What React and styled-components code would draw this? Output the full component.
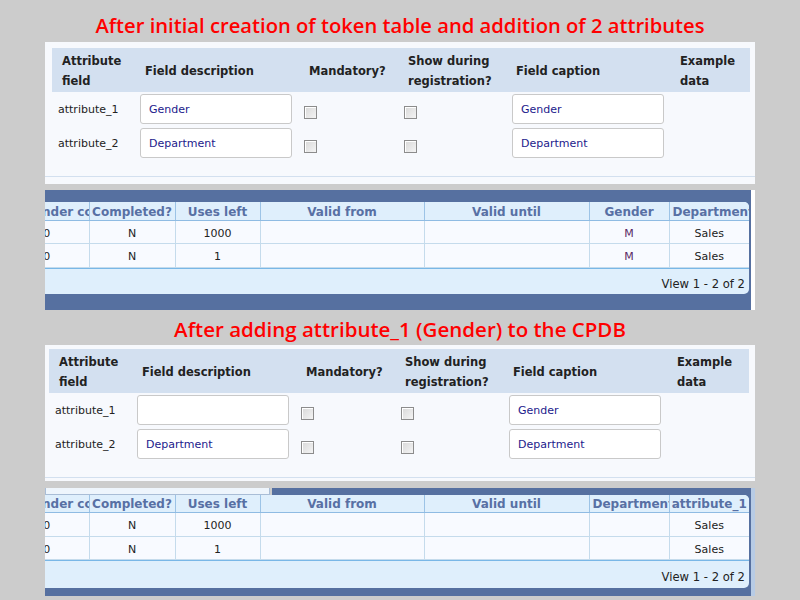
import React from 'react';
import styled, { createGlobalStyle } from 'styled-components';

const DARK = '#5670a0';

const Global = createGlobalStyle`
  html, body { margin: 0; padding: 0; background: #cccccc; }
  body { font-family: "DejaVu Sans", Verdana, sans-serif; }
  #root { width: 800px; height: 600px; }
`;

const Page = styled.div`
  width: 800px;
  height: 600px;
  overflow: hidden;
  background: #cccccc;
  display: flex;
  flex-direction: column;
`;

const Title = styled.h1`
  margin: 0;
  padding: ${p => p.$top}px 0 ${p => p.$bottom}px;
  line-height: 28px;
  text-align: center;
  color: #ff0000;
  font-family: "Open Sans", "Liberation Sans", sans-serif;
  font-weight: 600;
  font-size: ${p => p.$size}px;
  white-space: nowrap;
`;

const Panel = styled.section`
  margin-left: 45px;
  width: 710px;
  background: #f7f9fd;
  padding-bottom: ${p => p.$tail}px;
`;

const PanelBody = styled.div`
  padding: ${p => p.$top}px ${p => p.$right}px 16px ${p => p.$left}px;
  border-bottom: 1px solid #d3e0ef;
`;

const AttrGrid = styled.div`
  display: grid;
  grid-template-columns: 84px 164px 100px 108px 164px 1fr;
  grid-auto-rows: auto;
`;

const HeadCell = styled.div`
  box-sizing: border-box;
  background: #d3e0f0;
  height: 44px;
  display: flex;
  align-items: center;
  padding: 2px 0 0 ${p => p.$pad}px;
  font-family: "DejaVu Sans", Verdana, sans-serif;
  font-weight: bold;
  font-size: 11.5px;
  line-height: 20px;
  color: #222;
`;

const BodyCell = styled.div`
  height: 34px;
  display: flex;
  align-items: center;
  padding-left: ${p => p.$pad ?? 4}px;
  font-size: 11px;
  color: #222;
`;

const Field = styled.input`
  box-sizing: border-box;
  width: 152px;
  height: 30px;
  margin: 0;
  border: 1px solid #c9c9c9;
  border-radius: 3px;
  background: #ffffff;
  padding: 0 8px;
  font-family: "DejaVu Sans", Verdana, sans-serif;
  font-size: 11px;
  color: #1c1a8c;
  outline: none;
`;

const Check = styled.input`
  appearance: none;
  box-sizing: border-box;
  width: 13px;
  height: 13px;
  margin: 7px 0 0 0;
  border: 1px solid #8c8c8c;
  background: linear-gradient(135deg, #d8d8d8 0%, #f4f4f4 100%);
  box-shadow: inset 1px 1px 0 #ffffff;
`;

const GridWrap = styled.div`
  margin: ${p => p.$mt}px 0 0 45px;
  width: 710px;
  display: flex;
`;

const GridFrame = styled.div`
  width: 706px;
  display: flex;
  flex-direction: column;
`;

const TopBar = styled.div`
  height: ${p => p.$h}px;
  background: ${p => (p.$split ? '#cccccc' : DARK)};
  display: flex;
`;

const Stub = styled.div`
  box-sizing: border-box;
  width: 225px;
  background: #eef5fc;
  border: 1px solid #a9bdd6;
  border-top: none;
`;

const DarkFill = styled.div`
  flex: 1;
  margin-left: 2px;
  background: ${DARK};
`;

const GridBody = styled.div`
  background: ${DARK};
  padding-right: 2px;
`;

const Viewport = styled.div`
  overflow: hidden;
  border-radius: 0 5px 5px 0;
  background: #dfeffc;
`;

const Table = styled.table`
  border-collapse: collapse;
  table-layout: fixed;
  width: 744px;
  margin-left: -40px;
`;

const Th = styled.th`
  height: ${p => p.$h}px;
  padding: 1px ${p => (p.$clip ? 3 : 2)}px 0;
  background: #dfeffc;
  color: #5870a4;
  font-family: "DejaVu Sans", Verdana, sans-serif;
  font-weight: bold;
  font-size: 12px;
  text-align: ${p => (p.$clip ? 'left' : 'center')};
  white-space: nowrap;
  overflow: hidden;
  border-right: 1px solid #9cc3e6;
  border-bottom: 1px solid #8fbbe3;
  &:last-child { border-right: none; }
`;

const Td = styled.td`
  height: ${p => p.$h}px;
  padding: 2px 2px 0;
  background: #f8faff;
  color: ${p => p.$color || '#222'};
  font-family: "DejaVu Sans", Verdana, sans-serif;
  font-size: 11px;
  text-align: center;
  white-space: nowrap;
  overflow: hidden;
  border-right: 1px solid #c5dbec;
  border-bottom: 1px solid #c5dbec;
  &:last-child { border-right: none; }
`;

const Pager = styled.div`
  box-sizing: border-box;
  height: ${p => p.$h}px;
  border-top: 1px solid #79b7e7;
  display: flex;
  align-items: center;
  justify-content: flex-end;
  padding: 5px 4px 0 0;
  font-size: 11.6px;
  color: #222;
`;

const BottomBar = styled.div`
  height: ${p => p.$h}px;
  background: ${DARK};
`;

const Strip = styled.div`
  width: 4px;
  background: ${p => p.$bg};
`;

const COLS = [84, 86, 85, 164, 165, 80, 80];

function AttributePanel({ first, top, left, right, tail }) {
  const heads = [
    ['Attribute', 'field'],
    ['Field description'],
    ['Mandatory?'],
    ['Show during', 'registration?'],
    ['Field caption'],
    ['Example', 'data'],
  ];
  const pads = [10, 9, 9, 8, 8, 8];
  const rows = [
    { name: 'attribute_1', desc: first, cap: 'Gender' },
    { name: 'attribute_2', desc: 'Department', cap: 'Department' },
  ];
  return (
    <Panel $tail={tail}>
      <PanelBody $top={top} $left={left} $right={right}>
        <AttrGrid>
          {heads.map((h, i) => (
            <HeadCell key={i} $pad={pads[i]}>
              <span>
                {h.map((l, j) => (
                  <React.Fragment key={j}>
                    {j > 0 && <br />}
                    {l}
                  </React.Fragment>
                ))}
              </span>
            </HeadCell>
          ))}
          {rows.map(r => (
            <React.Fragment key={r.name}>
              <BodyCell $pad={6}>{r.name}</BodyCell>
              <BodyCell><Field readOnly value={r.desc} /></BodyCell>
              <BodyCell><Check type="checkbox" readOnly /></BodyCell>
              <BodyCell><Check type="checkbox" readOnly /></BodyCell>
              <BodyCell><Field readOnly value={r.cap} /></BodyCell>
              <BodyCell />
            </React.Fragment>
          ))}
        </AttrGrid>
      </PanelBody>
    </Panel>
  );
}

function TokenGrid({ mt, heads, rows, split, topH, headH, rowH, footH, bottomH, strip }) {
  return (
    <GridWrap $mt={mt}>
      <GridFrame>
        <TopBar $h={topH} $split={split}>
          {split && (
            <>
              <Stub />
              <DarkFill />
            </>
          )}
        </TopBar>
        <GridBody>
          <Viewport>
            <Table>
              <colgroup>
                {COLS.map((w, i) => <col key={i} style={{ width: w }} />)}
              </colgroup>
              <thead>
                <tr>
                  {heads.map((h, i) => (
                    <Th key={i} $h={headH} $clip={i === 0 || h === 'Department'}>{h}</Th>
                  ))}
                </tr>
              </thead>
              <tbody>
                {rows.map((r, ri) => (
                  <tr key={ri}>
                    {r.map((c, ci) => (
                      <Td key={ci} $h={rowH[ri]} $color={c === 'M' ? '#5b2a66' : undefined}>{c}</Td>
                    ))}
                  </tr>
                ))}
              </tbody>
            </Table>
            <Pager $h={footH}>View 1 - 2 of 2</Pager>
          </Viewport>
        </GridBody>
        <BottomBar $h={bottomH} />
      </GridFrame>
      <Strip $bg={strip} />
    </GridWrap>
  );
}

export default function App() {
  return (
    <Page>
      <Global />
      <Title $top={11} $bottom={3} $size={20.2}>After initial creation of token table and addition of 2 attributes</Title>
      <AttributePanel first="Gender" top={6} left={7} right={5} tail={7} />
      <TokenGrid
        mt={6}
        topH={12}
        headH={17}
        rowH={[20, 21]}
        footH={26}
        bottomH={16}
        strip="#ffffff"
        heads={['Reminder count', 'Completed?', 'Uses left', 'Valid from', 'Valid until', 'Gender', 'Department']}
        rows={[
          ['0', 'N', '1000', '', '', 'M', 'Sales'],
          ['0', 'N', '1', '', '', 'M', 'Sales'],
        ]}
      />
      <Title $top={5} $bottom={2} $size={20.5}>After adding attribute_1 (Gender) to the CPDB</Title>
      <AttributePanel first="" top={4} left={4} right={6} tail={3} />
      <TokenGrid
        mt={7}
        split
        topH={7}
        headH={16}
        rowH={[21, 20]}
        footH={28}
        bottomH={8}
        strip="#b7cbe5"
        heads={['Reminder count', 'Completed?', 'Uses left', 'Valid from', 'Valid until', 'Department', 'attribute_1']}
        rows={[
          ['0', 'N', '1000', '', '', '', 'Sales'],
          ['0', 'N', '1', '', '', '', 'Sales'],
        ]}
      />
    </Page>
  );
}
